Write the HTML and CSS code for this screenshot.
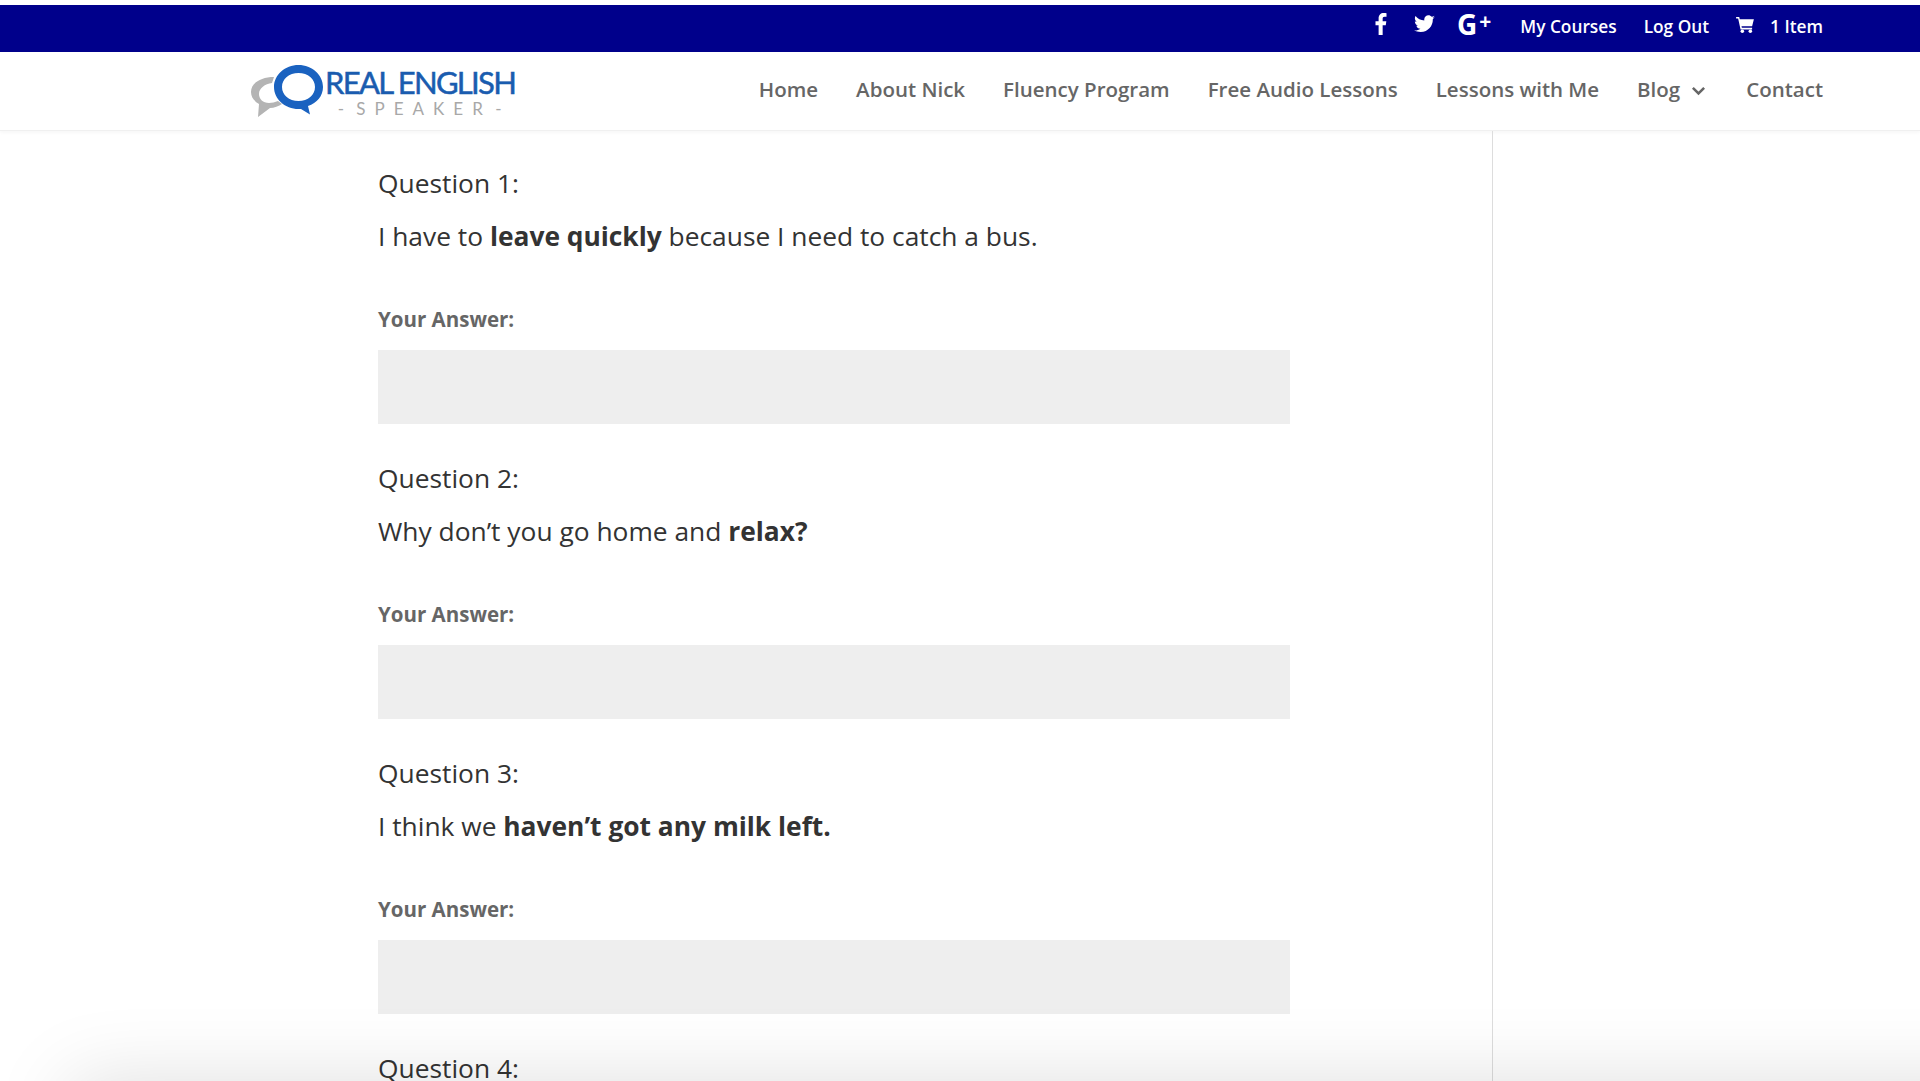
FILE: index.html
```html
<!DOCTYPE html>
<html lang="en">
<head>
    <meta charset="UTF-8">
    <title>Real English Speaker</title>
    <link rel="stylesheet" href="styles.css">
</head>
<body>
    <div class="top-bar">
        <a class="social" href="#" aria-label="Facebook">
            <svg class="icon-fb" viewBox="0 0 12 24"><path d="M3.4 24V13.3H0V9h3.4V6C3.4 2.2 5.600 0 9 0c1.300 0 2.300.1 3 .2V4H9.900C8.200 4 7.800 4.900 7.800 6.200V9h4l-.6 4.300H7.800V24z"/></svg>
        </a>
        <a class="social" href="#" aria-label="Twitter">
            <svg class="icon-tw" viewBox="0 0 24 20"><path d="M24 2.400c-.9.400-1.800.7-2.800.8 1-.6 1.800-1.600 2.200-2.700-1 .6-2 1-3.100 1.200C19.300.7 18 0 16.600 0c-2.700 0-4.900 2.200-4.900 4.900 0 .4 0 .8.100 1.100C7.700 5.800 4.100 3.900 1.700.9c-.4.700-.7 1.600-.7 2.500 0 1.700.9 3.200 2.200 4.100-.8 0-1.600-.2-2.200-.6v.1c0 2.400 1.700 4.400 3.900 4.800-.4.100-.8.200-1.300.2-.3 0-.6 0-.9-.1.600 2 2.400 3.400 4.600 3.400-1.700 1.300-3.800 2.100-6.100 2.100-.4 0-.8 0-1.200-.1C2.200 18.200 4.800 19 7.500 19c9.100 0 14-7.500 14-14v-.6c1-.7 1.800-1.500 2.500-2z"/></svg>
        </a>
        <a class="social gplus" href="#">G<span class="plus">+</span></a>
        <a class="top-link" href="#">My Courses</a>
        <a class="top-link" href="#">Log Out</a>
        <a class="top-link cart" href="#">
            <svg class="icon-cart" viewBox="0 0 20 18"><path d="M0 0h3.500l.6 2.400H20l-2 8.100H6.100l.4 1.700H18v1.800H5L2.300 1.800H0z"/><circle cx="7" cy="16" r="2"/><circle cx="16" cy="16" r="2"/></svg>
            1 Item
        </a>
    </div>

    <header class="main-header">
        <a class="logo" href="#">
            <svg class="logo-mark" viewBox="0 0 76 56">
                <path class="bubble-grey" d="M24 14C11 14 1 20 1 29c0 5 3 9 8 12l-1 13 12-9c4 0 9-2 12-4l-4-3c-3 1-6 2-9 2-6 0-10-4-10-9 0-6 6-10 13-11z"/>
                <path class="bubble-blue" d="M48.500 2C35 2 24 12 24 24s11 22 24.500 22c1 0 1.500 0 2.500-.1l9 5.600-2-8.500c9-3 15-10 15-19C73 12 62 2 48.500 2zm0 8C58 10 65 16 65 24s-7 14-16.500 14S32 32 32 24s7-14 16.500-14z"/>
            </svg>
            <span class="logo-text">
                <span class="logo-name">REAL ENGLISH</span>
                <span class="logo-sub">- SPEAKER -</span>
            </span>
        </a>
        <nav class="main-nav">
            <a href="#">Home</a>
            <a href="#">About Nick</a>
            <a href="#">Fluency Program</a>
            <a href="#">Free Audio Lessons</a>
            <a href="#">Lessons with Me</a>
            <a class="has-sub" href="#">Blog
                <svg class="chevron" viewBox="0 0 12 8"><path d="M1.500 1.500 6 6l4.500-4.500"/></svg>
            </a>
            <a href="#">Contact</a>
        </nav>
    </header>

    <div class="content">
        <div class="question">
            <h3>Question 1:</h3>
            <p>I have to <strong>leave quickly</strong> because I need to catch a bus.</p>
            <label for="answer-1">Your Answer:</label>
            <input type="text" id="answer-1">
        </div>
        <div class="question">
            <h3>Question 2:</h3>
            <p>Why don’t you go home and <strong>relax?</strong></p>
            <label for="answer-2">Your Answer:</label>
            <input type="text" id="answer-2">
        </div>
        <div class="question">
            <h3>Question 3:</h3>
            <p>I think we <strong>haven’t got any milk left.</strong></p>
            <label for="answer-3">Your Answer:</label>
            <input type="text" id="answer-3">
        </div>
        <div class="question">
            <h3>Question 4:</h3>
        </div>
    </div>

    <div class="bottom-shade"></div>
</body>
</html>
```
FILE: styles.css
```css
html {
    overflow: hidden;
}
body {
    font-family: "Open Sans", Arial, sans-serif;
    margin: 0;
    padding: 5px 0 0;
    height: 1076px;
    overflow: hidden;
    background-color: white;
    color: #333;
}
a {
    text-decoration: none;
    color: inherit;
}

/* Top bar */
.top-bar {
    display: flex;
    justify-content: flex-end;
    align-items: center;
    height: 47px;
    box-sizing: border-box;
    padding: 0 97px 5px 0;
    background-color: #00008b;
    color: white;
    font-size: 17.3px;
    font-weight: 600;
}
.social {
    display: flex;
    align-items: center;
    margin-right: 27px;
    margin-bottom: 5px;
}
.social svg {
    fill: white;
}
.icon-fb {
    width: 12px;
    height: 22px;
}
.icon-tw {
    width: 21px;
    height: 18px;
}
.social + .social {
    margin-right: 22px;
}
.social + .gplus {
    margin-right: 29px;
}
.gplus {
    font-size: 28px;
    font-weight: 700;
    line-height: 28px;
}
.plus {
    font-size: 21px;
    margin-left: 2px;
    margin-top: -5px;
}
.top-link {
    margin-right: 27px;
}
.cart {
    display: flex;
    align-items: center;
    margin-right: 0;
}
.icon-cart {
    width: 18px;
    height: 16px;
    fill: white;
    margin-right: 16px;
    margin-top: -2px;
}

/* Main header */
.main-header {
    display: flex;
    justify-content: space-between;
    align-items: center;
    height: 79px;
    box-sizing: border-box;
    padding: 0 97px 4px 250px;
    background-color: white;
    border-bottom: 1px solid #f0f0f0;
    box-shadow: 0 2px 3px rgba(0, 0, 0, 0.03);
}
.logo {
    display: flex;
    align-items: flex-start;
    height: 56px;
}
.logo-mark {
    width: 76px;
    height: 56px;
    flex: none;
    margin-top: 2px;
}
.bubble-grey {
    fill: #b4b4b4;
}
.bubble-blue {
    fill: #1a62c0;
}
.logo-text {
    display: flex;
    flex-direction: column;
    align-items: center;
    margin-left: -1px;
    padding-top: 4px;
}
.logo-name {
    font-family: "Lato", Arial, sans-serif;
    font-size: 31px;
    font-weight: 400;
    line-height: 34px;
    letter-spacing: -1.7px;
    color: #1a5caf;
    -webkit-text-stroke: .5px #1a5caf;
}
.logo-sub {
    font-family: "Lato", Arial, sans-serif;
    font-size: 17px;
    line-height: 20px;
    letter-spacing: 9px;
    word-spacing: -10px;
    padding-left: 8px;
    color: #a8a8a8;
}
.main-nav {
    display: flex;
    align-items: center;
    gap: 38px;
    font-size: 20.5px;
    font-weight: 600;
    color: #666;
}
.has-sub {
    display: flex;
    align-items: center;
    gap: 11px;
    margin-right: 2px;
}
.chevron {
    width: 15px;
    height: 10px;
    fill: none;
    stroke: #666;
    stroke-width: 2;
    margin-top: 3px;
}

/* Questions */
.content {
    width: 1493px;
    height: 950px;
    box-sizing: border-box;
    padding: 32px 0 0 378px;
    border-right: 1px solid #ddd;
}
.question {
    width: 912px;
    height: 295px;
}
.question h3 {
    margin: 0;
    font-size: 26.35px;
    font-weight: 400;
    line-height: 40px;
    color: #333;
}
.question p {
    margin: 13px 0 0;
    font-size: 26.35px;
    line-height: 40px;
    color: #333;
}
.question p strong {
    font-weight: 700;
}
.question label {
    display: block;
    margin-top: 49px;
    font-size: 20.5px;
    font-weight: 700;
    line-height: 28px;
    color: #666;
}
.question input {
    display: block;
    width: 100%;
    height: 74px;
    margin-top: 17px;
    box-sizing: border-box;
    border: none;
    background-color: #eee;
}

/* Shade along the bottom edge */
.bottom-shade {
    position: fixed;
    left: 70px;
    right: -200px;
    top: 1081px;
    height: 100px;
    box-shadow: 0 0 80px rgba(0, 0, 0, 0.13);
}
```
